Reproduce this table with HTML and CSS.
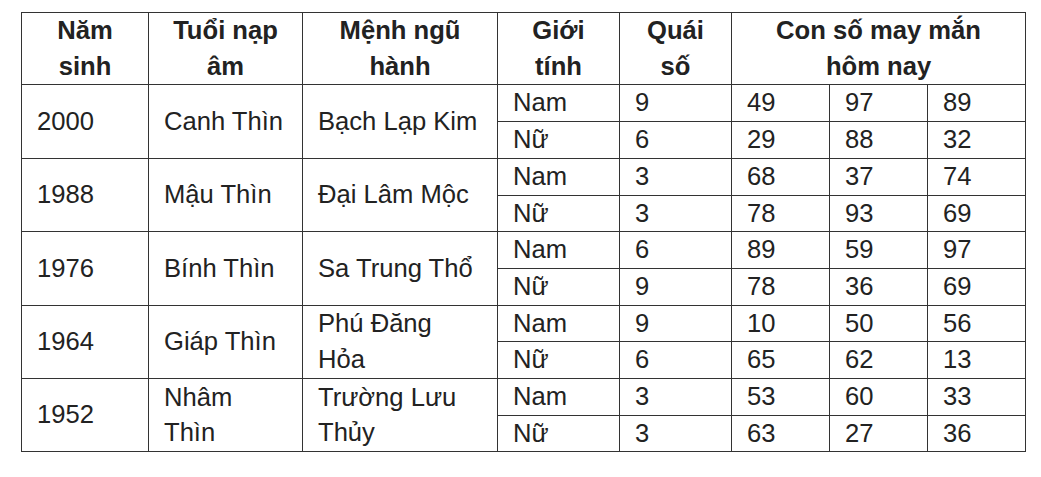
FILE: index.html
```html
<!DOCTYPE html>
<html lang="vi">
<head>
<meta charset="utf-8">
<title>Con số may mắn</title>
<link rel="stylesheet" href="styles.css">
</head>
<body>
<table class="lucky">
  <colgroup>
    <col class="c-year"><col class="c-age"><col class="c-elem"><col class="c-sex"><col class="c-qs"><col class="c-n"><col class="c-n"><col class="c-n">
  </colgroup>
  <thead>
    <tr>
      <th>Năm<br>sinh</th>
      <th>Tuổi nạp<br>âm</th>
      <th>Mệnh ngũ<br>hành</th>
      <th>Giới<br>tính</th>
      <th>Quái<br>số</th>
      <th colspan="3">Con số may mắn<br>hôm nay</th>
    </tr>
  </thead>
  <tbody>
    <tr><td rowspan="2">2000</td><td rowspan="2">Canh Thìn</td><td rowspan="2">Bạch Lạp Kim</td><td>Nam</td><td>9</td><td>49</td><td>97</td><td>89</td></tr>
    <tr><td>Nữ</td><td>6</td><td>29</td><td>88</td><td>32</td></tr>
    <tr><td rowspan="2">1988</td><td rowspan="2">Mậu Thìn</td><td rowspan="2">Đại Lâm Mộc</td><td>Nam</td><td>3</td><td>68</td><td>37</td><td>74</td></tr>
    <tr><td>Nữ</td><td>3</td><td>78</td><td>93</td><td>69</td></tr>
    <tr><td rowspan="2">1976</td><td rowspan="2">Bính Thìn</td><td rowspan="2">Sa Trung Thổ</td><td>Nam</td><td>6</td><td>89</td><td>59</td><td>97</td></tr>
    <tr><td>Nữ</td><td>9</td><td>78</td><td>36</td><td>69</td></tr>
    <tr><td rowspan="2">1964</td><td rowspan="2">Giáp Thìn</td><td rowspan="2">Phú Đăng<br>Hỏa</td><td>Nam</td><td>9</td><td>10</td><td>50</td><td>56</td></tr>
    <tr><td>Nữ</td><td>6</td><td>65</td><td>62</td><td>13</td></tr>
    <tr><td rowspan="2">1952</td><td rowspan="2">Nhâm<br>Thìn</td><td rowspan="2">Trường Lưu<br>Thủy</td><td>Nam</td><td>3</td><td>53</td><td>60</td><td>33</td></tr>
    <tr><td>Nữ</td><td>3</td><td>63</td><td>27</td><td>36</td></tr>
  </tbody>
</table>
</body>
</html>
```

FILE: styles.css
```css
html, body {
  margin: 0;
  padding: 0;
  background: #ffffff;
}

body {
  font-family: "Liberation Sans", Arial, sans-serif;
  color: #222222;
}

.lucky {
  margin: 12px 0 0 21px;
  width: 1005px;
  table-layout: fixed;
  border-collapse: collapse;
  font-size: 25.6px;
  line-height: 1.395;
}

.c-year { width: 127px; }
.c-age { width: 154px; }
.c-elem { width: 195px; }
.c-sex { width: 122px; }
.c-qs { width: 112px; }
.c-n { width: 98px; }

.lucky th,
.lucky td {
  border: 1px solid #333333;
  padding: 0 15px;
  white-space: nowrap;
  vertical-align: middle;
}

.lucky th {
  font-weight: bold;
  text-align: center;
}

.lucky td {
  font-weight: normal;
  text-align: left;
}
```
